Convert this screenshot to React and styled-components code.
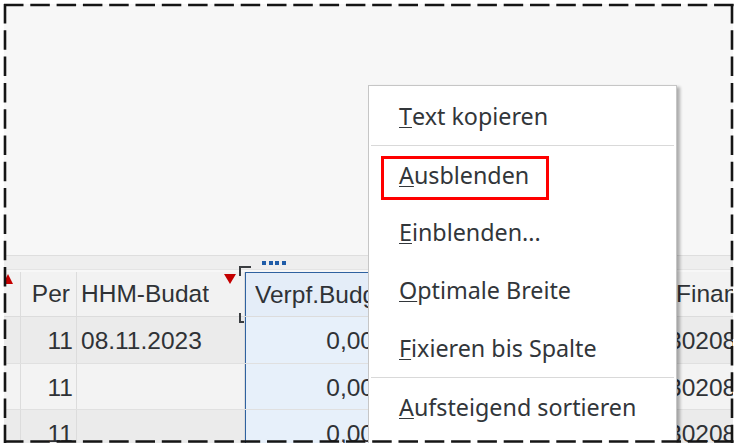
import React from 'react';
import styled, { createGlobalStyle } from 'styled-components';

const GlobalStyle = createGlobalStyle`
  html, body {
    margin: 0;
    padding: 0;
    background: #ffffff;
  }
  body {
    font-family: "Liberation Sans", Arial, sans-serif;
    color: #32363a;
  }
`;

const rows = [
  { per: '11', date: '08.11.2023', amount: '0,00', fin: '30208000' },
  { per: '11', date: '', amount: '0,00', fin: '30208000' },
  { per: '11', date: '', amount: '0,00', fin: '30208000' },
];

const menuItems = [
  { key: 'T', rest: 'ext kopieren' },
  { key: 'A', rest: 'usblenden', divided: true, marked: true },
  { key: 'E', rest: 'inblenden...' },
  { key: 'O', rest: 'ptimale Breite' },
  { key: 'F', rest: 'ixieren bis Spalte' },
  { key: 'A', rest: 'ufsteigend sortieren', divided: true },
];

// Spaltenbreiten in px
const cols = {
  sel: 17,
  per: 56,
  date: 168,
  amount: 133,
  hidden: 288,
  fin: 140,
};

const App = () => {
  return (
    <>
      <GlobalStyle />
      <Frame>
        <Panel>
          <EmptyArea />
          <ToolStrip />

          <HeaderRow>
            <Cell width={cols.sel}>
              <SortUp />
            </Cell>
            <Cell width={cols.per} align="right" pad="0 6px 0 4px">
              <Text>Per</Text>
            </Cell>
            <Cell width={cols.date} pad="0 4px">
              <Text>HHM-Budat</Text>
              <FilterMark />
            </Cell>
            <Cell width={cols.amount} selected header pad="0 4px 0 9px">
              <Text>Verpf.Budget</Text>
              <Dots>
                <i /><i /><i /><i />
              </Dots>
              <Bracket />
              <Bracket bottom />
            </Cell>
            <Cell width={cols.hidden} pad="0 4px" />
            <Cell width={cols.fin} pad="0 0 0 10px">
              <Text>Finanzstelle</Text>
            </Cell>
          </HeaderRow>

          {rows.map((r, i) => (
            <DataRow key={i} dark={i % 2 === 0}>
              <Cell width={cols.sel} />
              <Cell width={cols.per} align="right" pad="3px 3px 0 4px">
                <Text>{r.per}</Text>
              </Cell>
              <Cell width={cols.date} pad="3px 4px 0">
                <Text>{r.date}</Text>
              </Cell>
              <Cell width={cols.amount} selected align="right" pad="3px 3px 0 4px">
                <Text>{r.amount}</Text>
              </Cell>
              <Cell width={cols.hidden} pad="0 4px" />
              <Cell width={cols.fin} pad="3px 0 0 2px">
                <Text>{r.fin}</Text>
              </Cell>
            </DataRow>
          ))}

          <Menu>
            {menuItems.map((m, i) => (
              <MenuItem key={i} divided={m.divided}>
                <Label marked={m.marked}>
                  <Key>{m.key}</Key>
                  {m.rest}
                </Label>
              </MenuItem>
            ))}
          </Menu>
        </Panel>

        <DashedFrame width="739" height="447">
          <line x1="4" y1="5" x2="734" y2="5" />
          <line x1="5" y1="4" x2="5" y2="443" />
          <line x1="732" y1="4" x2="732" y2="443" />
          <line x1="4" y1="441.5" x2="734" y2="441.5" />
        </DashedFrame>
      </Frame>
    </>
  );
};

export default App;

// Rahmen und Fläche
const Frame = styled.div`
  position: relative;
  width: 739px;
  height: 447px;
  padding: 4px 6px 4px 4px;
  box-sizing: border-box;
  background: #ffffff;
`;

const Panel = styled.div`
  position: relative;
  width: 729px;
  height: 439px;
  overflow: hidden;
  background: #f7f7f7;
  display: flex;
  flex-direction: column;
`;

const EmptyArea = styled.div`
  flex: 0 0 251px;
`;

const ToolStrip = styled.div`
  flex: 0 0 auto;
  height: 13px;
  background: #eeeeee;
  border-top: 1px solid #dedede;
  border-bottom: 1px solid #e4e4e4;
  margin-bottom: 2px;
`;

// Tabelle
const HeaderRow = styled.div`
  display: flex;
  flex: 0 0 auto;
  height: 45px;
  background: #f2f2f2;
  border-bottom: 1px solid #dcdcdc;
  box-sizing: border-box;
`;

const DataRow = styled.div`
  display: flex;
  flex: 0 0 auto;
  height: 46.5px;
  background: ${({ dark }) => (dark ? '#ebebeb' : '#f3f3f3')};
  border-bottom: 1px solid #e0e0e0;
  box-sizing: border-box;
`;

const Cell = styled.div`
  position: relative;
  flex: 0 0 ${({ width }) => width}px;
  min-width: 0;
  display: flex;
  align-items: center;
  justify-content: ${({ align }) => (align === 'right' ? 'flex-end' : 'flex-start')};
  padding: ${({ pad }) => pad || '0'};
  box-sizing: border-box;
  border-right: 1px solid #dcdcdc;
  font-size: 24.5px;
  color: #2f3236;
  white-space: nowrap;
  background: ${({ selected, header }) =>
    selected ? (header ? '#e4edf8' : '#e7f0fa') : 'transparent'};
  border-left: ${({ selected }) => (selected ? '1.5px solid #2f62a0' : 'none')};
  border-top: ${({ selected, header }) => (selected && header ? '1.5px solid #2f62a0' : 'none')};
`;

const Text = styled.span`
  display: block;
  min-width: 0;
  overflow: hidden;
  white-space: nowrap;
`;

const SortUp = styled.span`
  position: absolute;
  left: -1px;
  top: 2px;
  width: 10px;
  height: 10px;
  background: #c40000;
  clip-path: polygon(50% 0, 100% 100%, 0 100%);
`;

const FilterMark = styled.span`
  position: absolute;
  right: 8px;
  top: 2px;
  width: 12px;
  height: 10px;
  background: #c40000;
  clip-path: polygon(0 0, 100% 0, 50% 100%);
`;

const Dots = styled.span`
  position: absolute;
  left: 16px;
  top: -12px;
  display: flex;
  gap: 2.5px;

  i {
    display: block;
    width: 4px;
    height: 4px;
    background: #1f5ca8;
  }
`;

const Bracket = styled.span`
  position: absolute;
  left: -7px;
  top: ${({ bottom }) => (bottom ? '40px' : '-7px')};
  width: 10px;
  height: 8px;
  border-left: 2px solid #3a3d40;
  ${({ bottom }) => (bottom ? 'border-bottom' : 'border-top')}: 2px solid #3a3d40;
`;

// Kontextmenü
const Menu = styled.div`
  position: absolute;
  left: 364px;
  top: 81px;
  width: 309px;
  height: 400px;
  box-sizing: border-box;
  padding-top: 1px;
  background: #ffffff;
  border: 1px solid #c6c6c6;
  box-shadow: 3px 2px 3px rgba(0, 0, 0, 0.3);
  font-family: "Noto Sans", "Open Sans", sans-serif;
  font-size: 23.3px;
  color: #32363a;
`;

const MenuItem = styled.div`
  display: flex;
  align-items: center;
  height: 58px;
  margin: 0 2px;
  padding-left: 28px;
  box-sizing: border-box;
  border-top: ${({ divided }) => (divided ? '1px solid #d9d9d9' : 'none')};
`;

const Label = styled.span`
  display: inline-flex;
  align-items: center;
  white-space: nowrap;
  ${({ marked }) =>
    marked &&
    `
    height: 44px;
    box-sizing: border-box;
    border: 3px solid #ff0000;
    padding: 0 17px 6px 15px;
    margin: 7px 0 0 -18px;
  `}
`;

const Key = styled.span`
  text-decoration: underline;
  text-decoration-thickness: 1px;
  text-underline-offset: 2px;
`;

const DashedFrame = styled.svg`
  position: absolute;
  left: 0;
  top: 0;
  pointer-events: none;

  line {
    stroke: #151515;
    stroke-width: 2.6;
    stroke-dasharray: 19.5 6.8;
  }
`;
